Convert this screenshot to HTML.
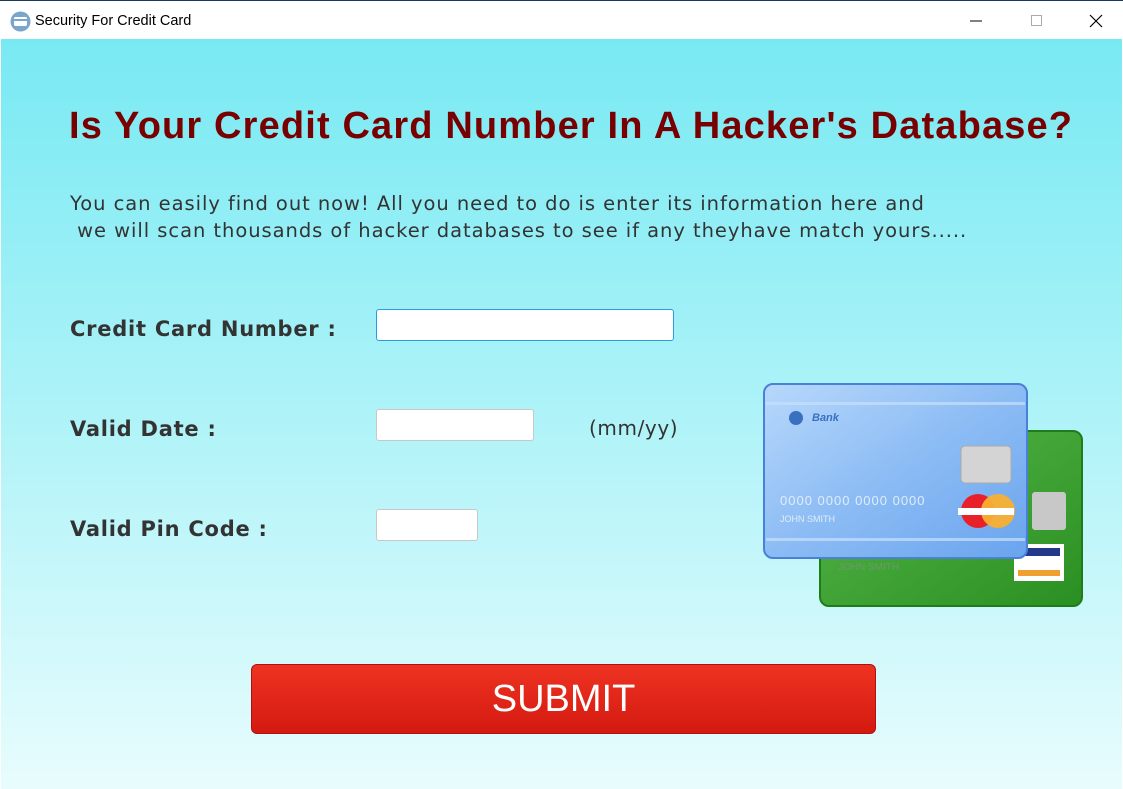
<!DOCTYPE html>
<html><head><style>
body{margin:0;width:1123px;height:789px;overflow:hidden;font-family:"Liberation Sans",sans-serif;position:relative;background:#fff}
.title{position:absolute;left:0;top:0;width:1123px;height:39px;background:#fff;border-top:1px solid #1b3a5c}
.title span{position:absolute;left:35px;top:12px;font-size:14.5px;color:#000}
.main{position:absolute;left:1px;top:39px;width:1121px;height:750px;background:linear-gradient(#78e9f3,#aef3f8 50%,#e8fcfd)}
.abs{position:absolute}
h1{position:absolute;left:69px;top:105px;margin:0;font-size:38px;letter-spacing:1.15px;font-weight:bold;color:#780000;white-space:nowrap}
.p{left:70px;top:190px;font-family:"DejaVu Sans",sans-serif;font-size:19.5px;letter-spacing:0.95px;color:#333;line-height:27px;white-space:pre}
.l{font-family:"DejaVu Sans",sans-serif;font-weight:bold;font-size:21px;letter-spacing:0.75px;color:#333}
.in{background:#fff;border:1px solid #c8c8c8;border-radius:3px}
</style></head><body>
<div class="title">
<svg class="abs" style="left:10px;top:10px" width="21" height="21"><circle cx="10.5" cy="10.5" r="10" fill="#7aa6cc"/><rect x="4" y="6" width="13" height="9" rx="1.5" fill="#fff"/><rect x="4" y="8" width="13" height="2" fill="#7aa6cc"/></svg>
<span>Security For Credit Card</span>
<svg class="abs" style="left:970px;top:12px" width="140" height="16"><line x1="0" y1="8" x2="12" y2="8" stroke="#000"/><rect x="61.5" y="2.5" width="10" height="10" fill="none" stroke="#aaa"/><path d="M120 2L132 14M132 2L120 14" stroke="#000" stroke-width="1.2"/></svg>
</div>
<div class="main"></div>
<h1>Is Your Credit Card Number In A Hacker's Database?</h1>
<div class="abs p">You can easily find out now! All you need to do is enter its information here and
 we will scan thousands of hacker databases to see if any theyhave match yours.....</div>
<div class="abs l" style="left:70px;top:317px">Credit Card Number :</div>
<div class="abs l" style="left:70px;top:417px">Valid Date :</div>
<div class="abs l" style="left:70px;top:517px">Valid Pin Code :</div>
<div class="abs in" style="left:376px;top:309px;width:296px;height:30px;border:1px solid #2a9ce0"></div>
<div class="abs in" style="left:376px;top:409px;width:156px;height:30px"></div>
<div class="abs in" style="left:376px;top:509px;width:100px;height:30px"></div>
<div class="abs" style="left:589px;top:416px;font-family:'DejaVu Sans',sans-serif;font-size:20px;letter-spacing:0.6px;color:#333">(mm/yy)</div>
<svg class="abs" style="left:760px;top:380px" width="330" height="232">
<defs><linearGradient id="g" x1="0" y1="0" x2="1" y2="1"><stop offset="0" stop-color="#58b84a"/><stop offset="1" stop-color="#2a8f22"/></linearGradient>
<linearGradient id="b" x1="0" y1="0" x2="1" y2="1"><stop offset="0" stop-color="#b8d8fb"/><stop offset=".5" stop-color="#8cbcf4"/><stop offset="1" stop-color="#6aa4ee"/></linearGradient></defs>
<rect x="60" y="51" width="262" height="175" rx="9" fill="url(#g)" stroke="#1e7d1a" stroke-width="2"/>
<rect x="272" y="112" width="34" height="38" rx="3" fill="#c8c8c8"/>
<rect x="254" y="164" width="50" height="37" fill="#fff"/><rect x="258" y="168" width="42" height="8" fill="#233a8a"/><rect x="258" y="190" width="42" height="6" fill="#f0a030"/>
<text x="78" y="190" font-size="10" fill="#6a9a6a" font-family="Liberation Sans">JOHN SMITH</text>
<rect x="4" y="4" width="263" height="174" rx="9" fill="url(#b)" stroke="#4a80d8" stroke-width="2"/>
<rect x="6" y="22" width="259" height="3" fill="#c8e0fc" opacity=".7"/>
<rect x="6" y="158" width="259" height="3" fill="#c8e0fc" opacity=".7"/>
<text x="52" y="41" font-size="11" font-style="italic" font-weight="bold" fill="#3a70c0" font-family="Liberation Sans">Bank</text>
<circle cx="36" cy="38" r="7" fill="#3a70c0"/>
<rect x="201" y="66" width="50" height="37" rx="4" fill="#d4d4d4" stroke="#aaa"/>
<text x="20" y="125" font-size="13" fill="#e0ecfb" font-family="Liberation Sans" letter-spacing="1">0000 0000 0000 0000</text>
<text x="20" y="142" font-size="9" fill="#e0ecfb" font-family="Liberation Sans">JOHN SMITH</text>
<circle cx="218" cy="131" r="17" fill="#e8202a"/><circle cx="238" cy="131" r="17" fill="#f8b030" opacity=".95"/>
<rect x="198" y="128" width="56" height="7" fill="#fff"/>
</svg>
<div class="abs" style="left:251px;top:664px;width:623px;height:68px;background:linear-gradient(#ee3322,#d41a10);border:1px solid #b01010;border-radius:6px;color:#fff;font-size:38px;text-align:center;line-height:68px">SUBMIT</div>
</body></html>
